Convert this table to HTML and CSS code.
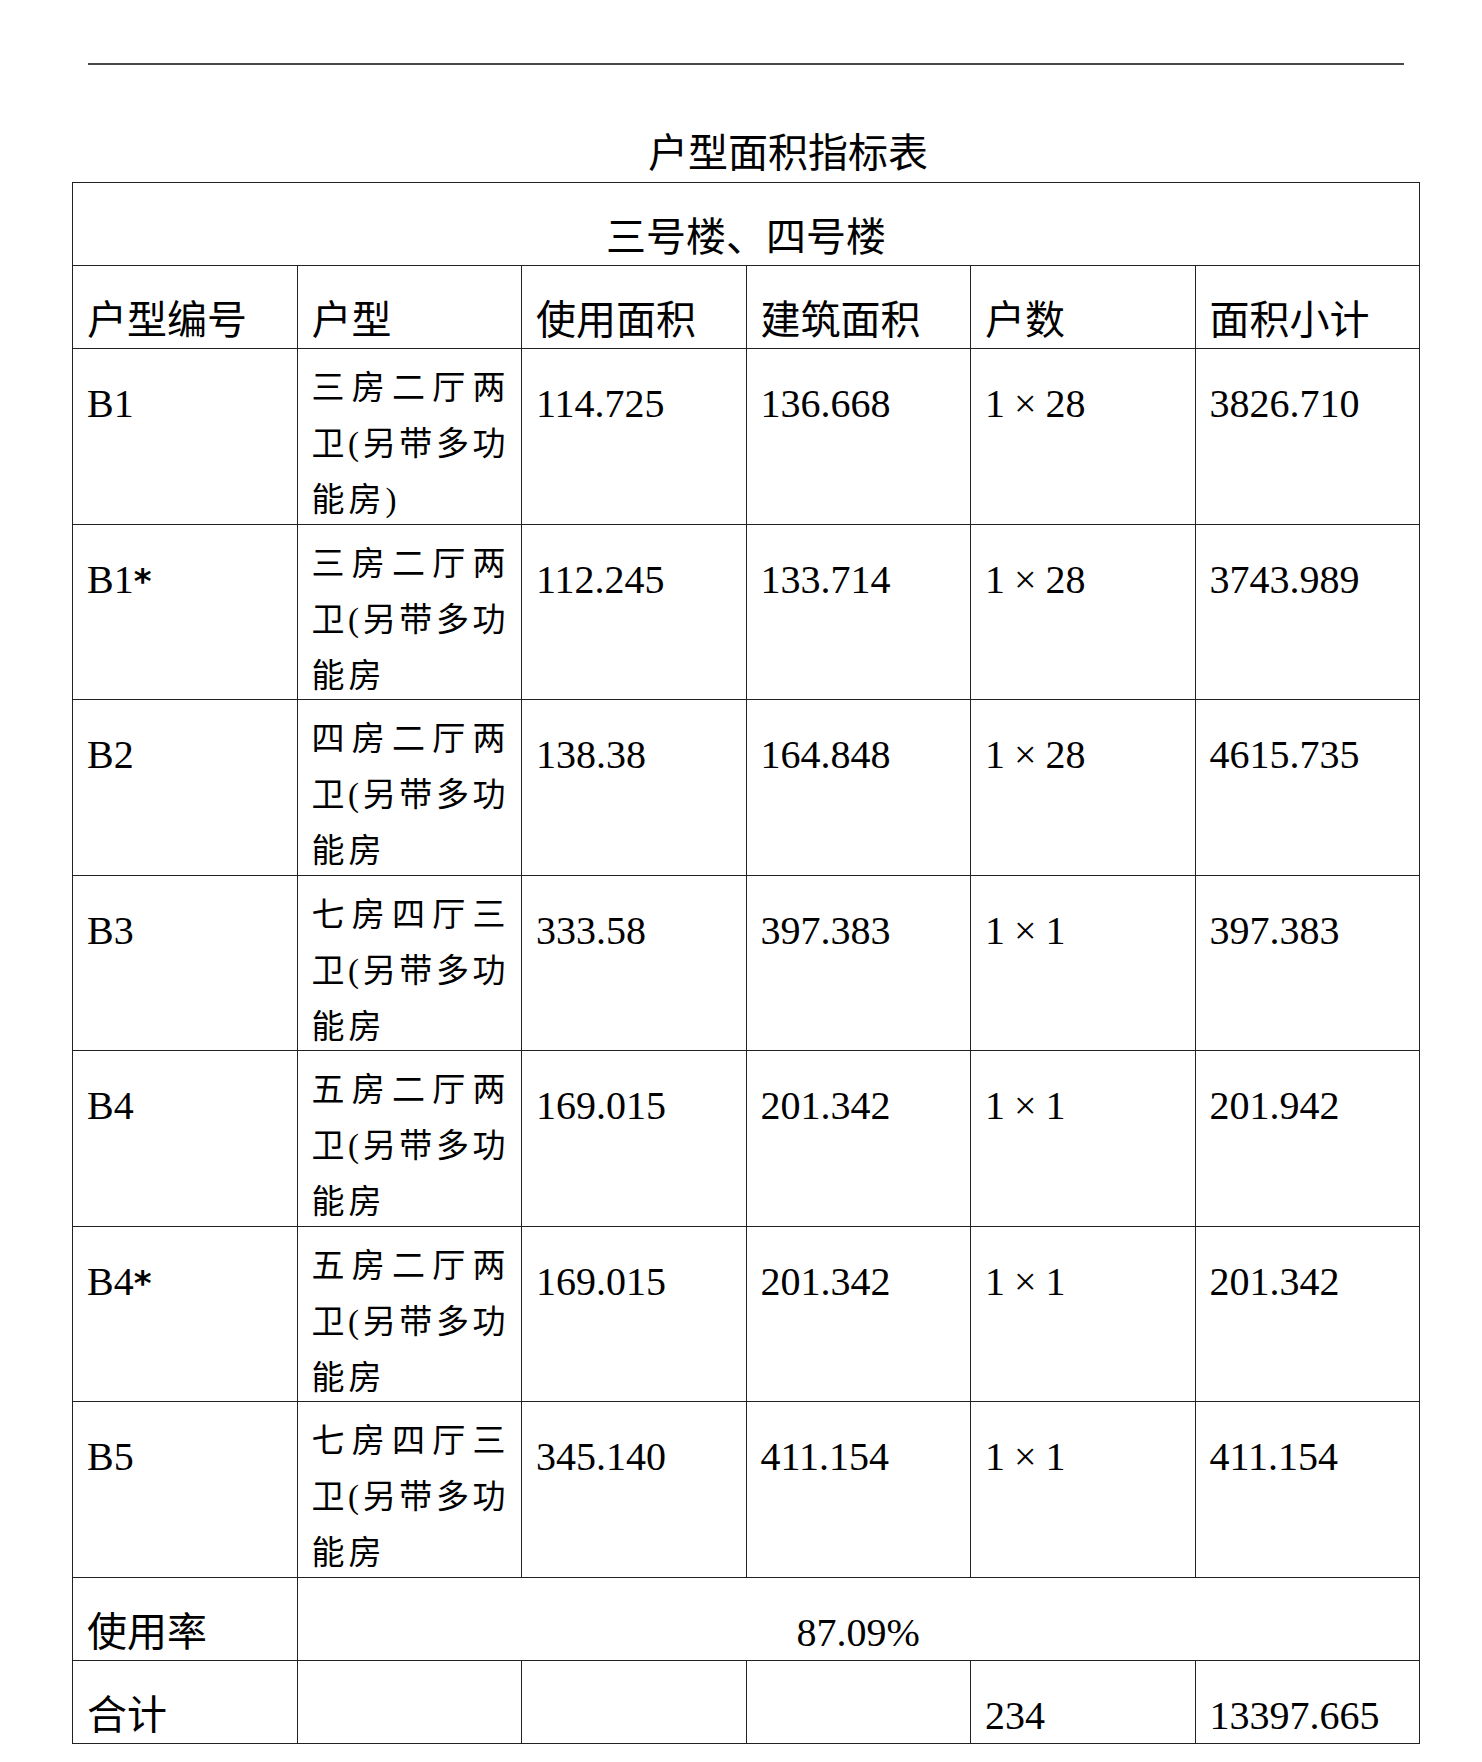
FILE: index.html
```html
<!DOCTYPE html>
<html lang="zh-CN">
<head>
<meta charset="utf-8">
<title>户型面积指标表</title>
<link rel="stylesheet" href="styles.css">
</head>
<body>
<div class="page">
  <div class="rule"></div>
  <h1 class="title">户型面积指标表</h1>
  <table class="grid">
    <tr class="row-sub"><td colspan="6" class="center">三号楼、四号楼</td></tr>
    <tr class="row-head"><td>户型编号</td><td>户型</td><td>使用面积</td><td>建筑面积</td><td>户数</td><td>面积小计</td></tr>
    <tr class="row-data">
      <td>B1</td>
      <td class="type"><div class="lines"><span class="ln just">三房二厅两</span><span class="ln just">卫(另带多功</span><span class="ln">能房)</span></div></td>
      <td>114.725</td><td>136.668</td><td>1<span class="x">×</span>28</td><td>3826.710</td>
    </tr>
    <tr class="row-data">
      <td>B1<span class="ast">*</span></td>
      <td class="type"><div class="lines"><span class="ln just">三房二厅两</span><span class="ln just">卫(另带多功</span><span class="ln">能房</span></div></td>
      <td>112.245</td><td>133.714</td><td>1<span class="x">×</span>28</td><td>3743.989</td>
    </tr>
    <tr class="row-data">
      <td>B2</td>
      <td class="type"><div class="lines"><span class="ln just">四房二厅两</span><span class="ln just">卫(另带多功</span><span class="ln">能房</span></div></td>
      <td>138.38</td><td>164.848</td><td>1<span class="x">×</span>28</td><td>4615.735</td>
    </tr>
    <tr class="row-data">
      <td>B3</td>
      <td class="type"><div class="lines"><span class="ln just">七房四厅三</span><span class="ln just">卫(另带多功</span><span class="ln">能房</span></div></td>
      <td>333.58</td><td>397.383</td><td>1<span class="x">×</span>1</td><td>397.383</td>
    </tr>
    <tr class="row-data">
      <td>B4</td>
      <td class="type"><div class="lines"><span class="ln just">五房二厅两</span><span class="ln just">卫(另带多功</span><span class="ln">能房</span></div></td>
      <td>169.015</td><td>201.342</td><td>1<span class="x">×</span>1</td><td>201.942</td>
    </tr>
    <tr class="row-data">
      <td>B4<span class="ast">*</span></td>
      <td class="type"><div class="lines"><span class="ln just">五房二厅两</span><span class="ln just">卫(另带多功</span><span class="ln">能房</span></div></td>
      <td>169.015</td><td>201.342</td><td>1<span class="x">×</span>1</td><td>201.342</td>
    </tr>
    <tr class="row-data">
      <td>B5</td>
      <td class="type"><div class="lines"><span class="ln just">七房四厅三</span><span class="ln just">卫(另带多功</span><span class="ln">能房</span></div></td>
      <td>345.140</td><td>411.154</td><td>1<span class="x">×</span>1</td><td>411.154</td>
    </tr>
    <tr class="row-foot"><td>使用率</td><td colspan="5" class="center">87.09%</td></tr>
    <tr class="row-foot"><td>合计</td><td></td><td></td><td></td><td>234</td><td>13397.665</td></tr>
  </table>
</div>
</body>
</html>
```
FILE: styles.css
```css
body {
  margin: 0;
  background: #fff;
  color: #000;
  font-family: "Liberation Serif", "Noto Sans CJK SC", serif;
}

.page {
  padding: 63px 0 0 72px;
  width: 1348px;
}

.rule {
  margin-left: 16px;
  width: 1316px;
  height: 2px;
  background: #484848;
}

.title {
  margin: 0;
  font-weight: 400;
  font-size: 40px;
  line-height: 40px;
  text-align: center;
  padding: 69px 0 8px 84px;
}

.grid {
  border-collapse: collapse;
  table-layout: fixed;
  width: 1348px;
}

.grid td {
  border: 1px solid #222;
  vertical-align: top;
  padding: 31px 14px 0;
  font-size: 40px;
  line-height: 48px;
  white-space: nowrap;
}

.grid td.center {
  text-align: center;
}

.row-sub,
.row-head,
.row-foot {
  height: 83px;
}

.row-data {
  height: 175.5px;
}

.grid td.type {
  padding-top: 11px;
  font-size: 33px;
  line-height: 56px;
}

.lines {
  margin-bottom: -14px;
}

.ln {
  display: block;
  width: 194px;
  letter-spacing: 4px;
}

.ln.just {
  letter-spacing: 0;
  text-align: justify;
  text-align-last: justify;
}

.x {
  margin: 0 9px;
}

.ast {
  font-family: "DejaVu Sans", sans-serif;
  font-weight: 700;
  font-size: 34px;
}
```
